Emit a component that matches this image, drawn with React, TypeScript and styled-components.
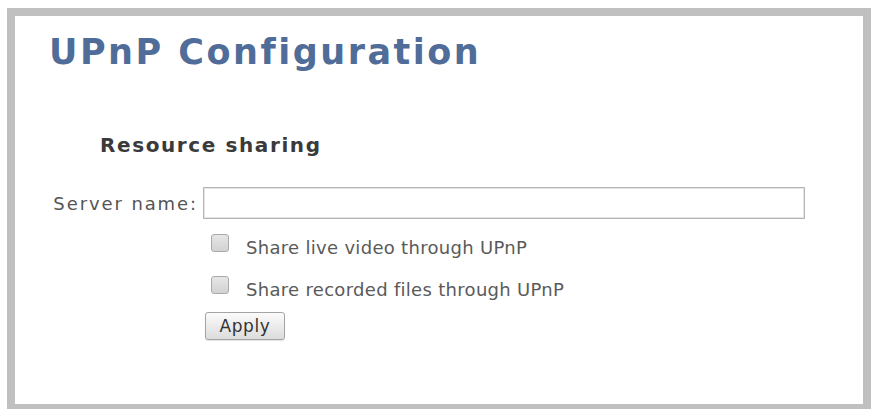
import styled, { createGlobalStyle } from 'styled-components'

const GlobalStyle = createGlobalStyle`
  html, body {
    margin: 0;
    padding: 0;
    background: #ffffff;
    overflow: hidden;
  }
  body {
    font-family: "DejaVu Sans", Verdana, sans-serif;
  }
`

const Page = styled.div`
  padding: 8px 0 0 7px;
  width: 871px;
  height: 409px;
  box-sizing: border-box;
`

const Panel = styled.div`
  height: 404px;
  box-sizing: border-box;
  border: 8px solid #c0c0c0;
  background: #ffffff;
  padding: 16px 0 0 34px;
`

const Title = styled.h1`
  margin: 0;
  font-size: 35px;
  line-height: 40px;
  font-weight: 700;
  letter-spacing: 2.5px;
  color: #4f6d98;
`

const SectionTitle = styled.h2`
  margin: 61px 0 0 51px;
  font-size: 20px;
  line-height: 24px;
  font-weight: 700;
  letter-spacing: 1.6px;
  color: #3a3a3a;
`

const Form = styled.div`
  margin: 30px 0 0 4px;
  display: grid;
  grid-template-columns: 144px 602px;
  column-gap: 6px;
`

const Label = styled.label`
  font-size: 18px;
  letter-spacing: 1.9px;
  color: #555555;
  text-align: right;
  align-self: center;
  margin-right: -1px;
`

const TextInput = styled.input`
  box-sizing: border-box;
  width: 602px;
  height: 32px;
  border: 1px solid #b5b5b5;
  box-shadow: inset 0 0 0 1px #e4e4e4;
  outline: none;
`

const CheckRow = styled.label<{ $top: number }>`
  grid-column: 2;
  display: flex;
  align-items: flex-start;
  gap: 17px;
  margin: ${p => p.$top}px 0 0 8px;
  font-size: 18px;
  line-height: 28px;
  letter-spacing: 0.3px;
  color: #5a5a5a;
`

const Box = styled.span`
  width: 18px;
  height: 18px;
  box-sizing: border-box;
  border: 1px solid #a9a9a9;
  border-radius: 3px;
  background: linear-gradient(#e6e6e6, #d2d2d2);
  flex: none;
`

const ApplyButton = styled.button`
  grid-column: 2;
  justify-self: start;
  margin: 8px 0 0 2px;
  width: 80px;
  height: 28px;
  border: 1px solid #a4a4a4;
  border-radius: 3px;
  background: linear-gradient(#fbfbfb, #dcdcdc);
  box-shadow: 0 1px 1px rgba(0, 0, 0, 0.12);
  font-family: "DejaVu Sans", Verdana, sans-serif;
  font-size: 17px;
  letter-spacing: 0.6px;
  color: #333333;
  padding: 0;
`

export default function App() {
  return (
    <Page>
      <GlobalStyle />
      <Panel>
        <Title>UPnP Configuration</Title>
        <SectionTitle>Resource sharing</SectionTitle>
        <Form>
          <Label>Server name:</Label>
          <TextInput type="text" />
          <CheckRow $top={15}>
            <Box />
            Share live video through UPnP
          </CheckRow>
          <CheckRow $top={14}>
            <Box />
            Share recorded files through UPnP
          </CheckRow>
          <ApplyButton>Apply</ApplyButton>
        </Form>
      </Panel>
    </Page>
  )
}
